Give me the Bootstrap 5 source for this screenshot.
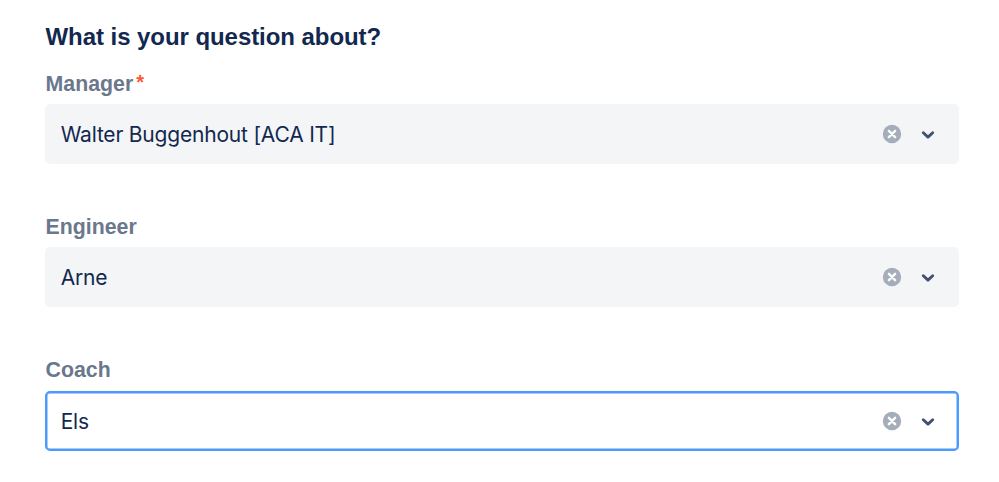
<!DOCTYPE html>
<html lang="en">
<head>
<meta charset="utf-8">
<title>Question form</title>
<link href="https://cdn.jsdelivr.net/npm/bootstrap@5.3.0/dist/css/bootstrap.min.css" rel="stylesheet">
<style>
body{background:#fff;color:#172b4d;font-family:"Liberation Sans",Arial,sans-serif}
.question-form{padding:19px 40.500px 0 45px}
.form-title{font-size:24px;line-height:36px;font-weight:700;letter-spacing:-.06px;margin-bottom:15px;padding-left:.5px;color:#12284f}
.field-label{font-size:21.3px;line-height:28px;font-weight:700;color:#6b778c;margin-bottom:6px;padding-left:.6px}
.required-mark{color:#ff5630;margin-left:3px;font-size:20px;line-height:1;vertical-align:2px}
.field-block{height:143px}
.select-box{height:60px;background:#f4f5f7;border:2px solid #f4f5f7;border-radius:5px;padding:0 20.500px 0 13.700px}
.select-box.is-focused{background:#fff;border-color:#4c9aff;box-shadow:inset 0 0 0 .5px #4c9aff;margin-top:7px}
.select-value{font-family:Inter,sans-serif;font-size:21px;line-height:30px;letter-spacing:-.2px;padding-top:2px;color:#12284f}
.clear-icon{margin-right:18px}
.is-focused .clear-cross{stroke:#fff}
.is-focused svg{margin-bottom:1px}
</style>
</head>
<body>
<form class="question-form">
  <h1 class="form-title">What is your question about?</h1>
  <div class="field-block">
    <div class="field-label">Manager<span class="required-mark">*</span></div>
    <div class="select-box d-flex align-items-center">
      <span class="select-value flex-grow-1">Walter Buggenhout [ACA IT]</span>
      <svg class="clear-icon" width="20" height="20" viewBox="0 0 20 20"><circle cx="10" cy="10" r="9.200" fill="#a5adba"/><path class="clear-cross" d="M6.900 6.900l6.200 6.200M13.100 6.900l-6.200 6.200" stroke="#f9fafb" stroke-width="2.500" stroke-linecap="round"/></svg>
      <svg width="16" height="16" viewBox="0 0 16 16"><path d="M3.300 6.700L8 11.100l4.700-4.400" fill="none" stroke="#42526e" stroke-width="2.900" stroke-linecap="round" stroke-linejoin="round"/></svg>
    </div>
  </div>
  <div class="field-block">
    <div class="field-label">Engineer</div>
    <div class="select-box d-flex align-items-center">
      <span class="select-value flex-grow-1">Arne</span>
      <svg class="clear-icon" width="20" height="20" viewBox="0 0 20 20"><circle cx="10" cy="10" r="9.200" fill="#a5adba"/><path class="clear-cross" d="M6.900 6.900l6.200 6.200M13.100 6.900l-6.200 6.200" stroke="#f9fafb" stroke-width="2.500" stroke-linecap="round"/></svg>
      <svg width="16" height="16" viewBox="0 0 16 16"><path d="M3.300 6.700L8 11.100l4.700-4.400" fill="none" stroke="#42526e" stroke-width="2.900" stroke-linecap="round" stroke-linejoin="round"/></svg>
    </div>
  </div>
  <div>
    <div class="field-label">Coach</div>
    <div class="select-box is-focused d-flex align-items-center">
      <span class="select-value flex-grow-1">Els</span>
      <svg class="clear-icon" width="20" height="20" viewBox="0 0 20 20"><circle cx="10" cy="10" r="9.200" fill="#a5adba"/><path class="clear-cross" d="M6.900 6.900l6.200 6.200M13.100 6.900l-6.200 6.200" stroke="#f9fafb" stroke-width="2.500" stroke-linecap="round"/></svg>
      <svg width="16" height="16" viewBox="0 0 16 16"><path d="M3.300 6.700L8 11.100l4.700-4.400" fill="none" stroke="#42526e" stroke-width="2.900" stroke-linecap="round" stroke-linejoin="round"/></svg>
    </div>
  </div>
</form>
<script src="https://cdn.jsdelivr.net/npm/bootstrap@5.3.0/dist/js/bootstrap.bundle.min.js"></script>
</body>
</html>
